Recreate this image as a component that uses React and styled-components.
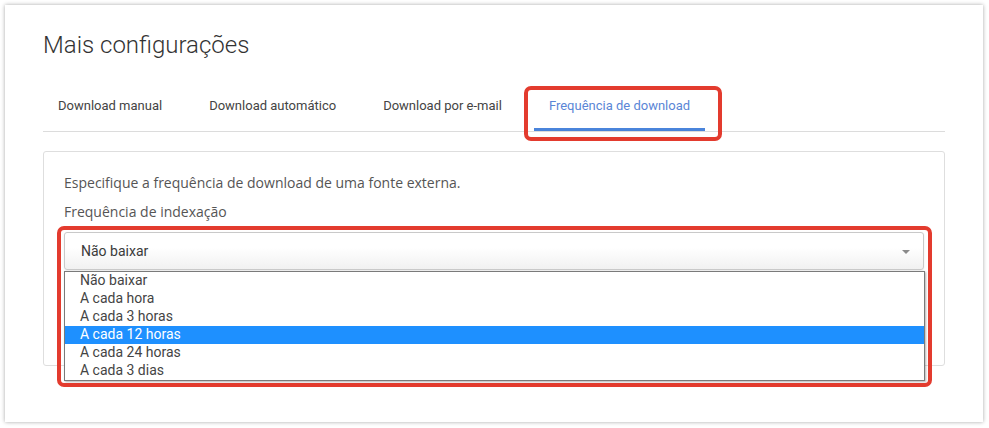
import styled, { createGlobalStyle } from 'styled-components';

const Global = createGlobalStyle`
    html, body {
        margin: 0;
        background: #fff;
    }
    * {
        box-sizing: border-box;
    }
`;

const tabs = ['Download manual', 'Download automático', 'Download por e-mail', 'Frequência de download'];
const options = ['Não baixar', 'A cada hora', 'A cada 3 horas', 'A cada 12 horas', 'A cada 24 horas', 'A cada 3 dias'];

export default function App() {
    return (
        <Page>
            <Global />
            <Card>
                <Title>Mais configurações</Title>

                <TabBar>
                    {tabs.map((t, i) => (
                        <Tab key={t} $active={i === tabs.length - 1}>
                            {t}
                            {i === tabs.length - 1 && <TabMark />}
                        </Tab>
                    ))}
                </TabBar>

                <Panel>
                    <Hint>Especifique a frequência de download de uma fonte externa.</Hint>
                    <Label>Frequência de indexação</Label>

                    <SelectWrap>
                        <SelectBox>
                            <span>Não baixar</span>
                            <Arrow />
                        </SelectBox>
                        <List>
                            {options.map((o, i) => (
                                <Option key={o} $selected={i === 3}>{o}</Option>
                            ))}
                        </List>
                        <SelectMark />
                    </SelectWrap>
                </Panel>
            </Card>
        </Page>
    );
}


const Page = styled.div`
    padding: 5px;
    font-family: Roboto, "Liberation Sans", sans-serif;
`;

const Card = styled.div`
    width: 978px;
    height: 417px;
    background: #fff;
    box-shadow: 0 0 4px rgba(0, 0, 0, 0.35);
    padding: 26px 38px 0;
    display: flex;
    flex-direction: column;
`;

const Title = styled.h1`
    margin: 0;
    font-size: 24px;
    line-height: 29px;
    font-weight: 300;
    color: #333;
`;

const TabBar = styled.div`
    margin-top: 20px;
    display: flex;
    gap: 17px;
    border-bottom: 1px solid #dcdcdc;
`;

const Tab = styled.div`
    position: relative;
    height: 51px;
    padding: 2px 15px 0;
    display: flex;
    align-items: center;
    font-size: 13px;
    color: ${(p) => (p.$active ? '#5a86d6' : '#444')};
    border-bottom: 3px solid ${(p) => (p.$active ? '#4a84db' : 'transparent')};
`;

const TabMark = styled.span`
    position: absolute;
    top: 6px;
    left: -10px;
    right: -17px;
    bottom: -13px;
    border: 4px solid #e33b2e;
    border-radius: 7px;
    pointer-events: none;
`;

const Panel = styled.div`
    margin-top: 19px;
    height: 215px;
    border: 1px solid #dedede;
    border-radius: 3px;
    padding: 20px;
    display: flex;
    flex-direction: column;
    font-family: "Open Sans", sans-serif;
`;

const Hint = styled.p`
    margin: 0;
    font-size: 14px;
    line-height: 22px;
    color: #555;
`;

const Label = styled.p`
    margin: 7px 0 9px;
    font-size: 14px;
    line-height: 22px;
    color: #555;
`;

const SelectWrap = styled.div`
    position: relative;
    height: 38px;
`;

const SelectBox = styled.div`
    height: 38px;
    border: 1px solid #c9c9c9;
    border-radius: 3px;
    background: linear-gradient(#fff 40%, #f1f1f1);
    box-shadow: 0 1px 2px rgba(0, 0, 0, 0.08);
    display: flex;
    align-items: center;
    justify-content: space-between;
    padding: 0 13px 0 16px;
    font-family: Roboto, sans-serif;
    font-size: 14px;
    color: #3a3a3a;
`;

const Arrow = styled.span`
    margin-top: 1px;
    border-left: 4px solid transparent;
    border-right: 4px solid transparent;
    border-top: 4px solid #8a8a8a;
`;

const List = styled.div`
    position: absolute;
    top: 39px;
    left: 0;
    right: -1px;
    border: 1px solid #7a7a7a;
    background: #fff;
    box-shadow: 1px 1px 2px rgba(0, 0, 0, 0.3);
`;

const Option = styled.div`
    height: 18px;
    line-height: 17px;
    padding-left: 15px;
    font-family: Roboto, sans-serif;
    font-size: 14px;
    color: ${(p) => (p.$selected ? '#fff' : '#444')};
    background: ${(p) => (p.$selected ? '#1e90ff' : 'transparent')};
`;

const SelectMark = styled.span`
    position: absolute;
    top: -6px;
    left: -7px;
    right: -8px;
    height: 161px;
    border: 4px solid #e33b2e;
    border-radius: 7px;
    pointer-events: none;
`;
